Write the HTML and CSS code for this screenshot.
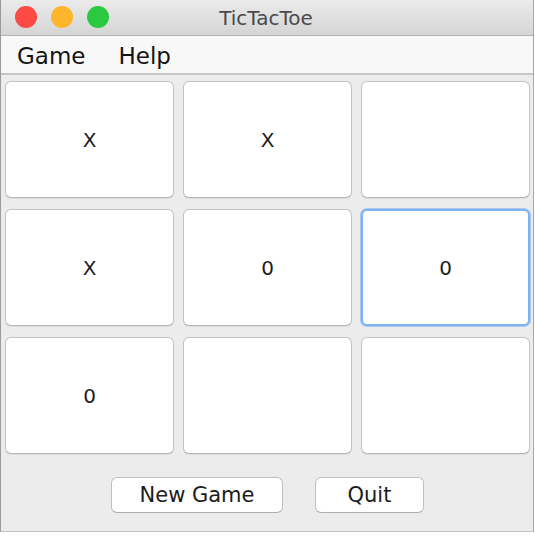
FILE: index.html
```html
<!DOCTYPE html>
<html>
<head>
<meta charset="utf-8">
<title>TicTacToe</title>
<link rel="stylesheet" href="styles.css">
</head>
<body>
<div class="window">
  <div class="titlebar">
    <div class="lights">
      <span class="light red"></span>
      <span class="light yellow"></span>
      <span class="light green"></span>
    </div>
    <div class="title">TicTacToe</div>
  </div>
  <div class="menubar">
    <span class="menu">Game</span>
    <span class="menu">Help</span>
  </div>
  <div class="content">
    <div class="board">
      <button class="cell">X</button>
      <button class="cell">X</button>
      <button class="cell"></button>
      <button class="cell">X</button>
      <button class="cell">0</button>
      <button class="cell focused">0</button>
      <button class="cell">0</button>
      <button class="cell"></button>
      <button class="cell"></button>
    </div>
    <div class="actions">
      <button class="btn btn-new">New Game</button>
      <button class="btn btn-quit">Quit</button>
    </div>
  </div>
</div>
</body>
</html>
```
FILE: styles.css
```css
html, body {
  margin: 0;
  padding: 0;
  background: #ffffff;
}
body {
  font-family: "DejaVu Sans", sans-serif;
  color: #1c1c1c;
}
.window {
  width: 532px;
  height: 531px;
  border-left: 1px solid #9a9a9a;
  border-right: 1px solid #a8a8a8;
  border-bottom: 1px solid #c4c4c4;
  background: #ececec;
  display: flex;
  flex-direction: column;
}
.titlebar {
  height: 35px;
  border-bottom: 1px solid #b1b1b1;
  background: linear-gradient(#ebebeb, #d5d5d5);
  position: relative;
  display: flex;
  align-items: center;
  justify-content: center;
}
.lights {
  position: absolute;
  left: 14px;
  top: 6px;
  display: flex;
  gap: 14px;
}
.light {
  width: 22px;
  height: 22px;
  border-radius: 50%;
  display: block;
}
.red { background: #fd4a45; }
.yellow { background: #fdb52b; }
.green { background: #2ac940; }
.title {
  font-size: 20px;
  color: #4a4a4a;
  margin-left: -2px;
}
.menubar {
  height: 37px;
  background: #f8f8f8;
  border-bottom: 2px solid #c6c6c6;
  display: flex;
  align-items: center;
  padding-left: 16px;
  gap: 33px;
}
.menu {
  font-size: 23px;
  color: #141414;
  line-height: 1;
  margin-top: 3px;
}
.content {
  flex: 1;
  padding: 6px 0 0 4px;
  display: flex;
  flex-direction: column;
}
.board {
  display: grid;
  grid-template-columns: repeat(3, 169px);
  grid-template-rows: repeat(3, 117px);
  column-gap: 9px;
  row-gap: 11px;
}
.cell {
  background: #ffffff;
  border: 1px solid #c2c2c2;
  border-bottom-color: #b3b3b3;
  border-radius: 6px;
  font-family: "DejaVu Sans", sans-serif;
  font-size: 20px;
  color: #1c1c1c;
  padding: 0;
  margin: 0;
  box-shadow: 0 1px 0 rgba(0,0,0,0.06);
}
.cell.focused {
  border: 2px solid #7fb2f0;
  box-shadow: 0 0 0 1px #a6c9f4;
}
.actions {
  display: flex;
  justify-content: center;
  gap: 32px;
  margin-top: 23px;
  padding-right: 3px;
}
.btn {
  height: 36px;
  background: #ffffff;
  border: 1px solid #c0c0c0;
  border-bottom-color: #aeaeae;
  border-radius: 6px;
  font-family: "DejaVu Sans", sans-serif;
  font-size: 21px;
  color: #1c1c1c;
  padding: 0;
  margin: 0;
}
.btn-new { width: 172px; }
.btn-quit { width: 109px; }
```
